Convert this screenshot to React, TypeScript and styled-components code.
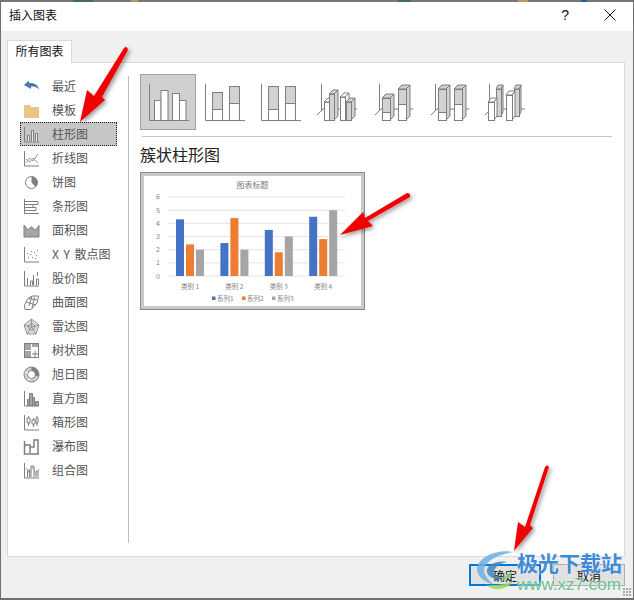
import styled, { createGlobalStyle } from 'styled-components';

const GlobalStyle = createGlobalStyle`
  html, body {
    margin: 0;
    padding: 0;
    background: #fff;
  }
  * {
    box-sizing: border-box;
  }
`;

const GRAY = '#7f7f7f';
const LIGHT = '#d2d2d2';

interface BarProps {
  x: number;
  w: number;
  top: number;
  bottom: number;
  split?: number;
  fill?: string;
  depth?: number;
}

// flat bar, optionally two tone when split is set
const Bar = ({ x, w, top, bottom, split, fill = '#fff' }: BarProps) => (
  <>
    {split !== undefined && (
      <rect x={x + 0.5} y={top + 0.5} width={w} height={split - top} fill={LIGHT} stroke={GRAY} />
    )}
    <rect
      x={x + 0.5}
      y={(split ?? top) + 0.5}
      width={w}
      height={bottom - (split ?? top)}
      fill={fill}
      stroke={GRAY}
    />
  </>
);

const Bar3D = ({ x, w, top, bottom, split, fill = '#fff', depth = 4 }: BarProps) => (
  <>
    <polygon
      points={`${x + w},${top} ${x + w + depth},${top - 4} ${x + w + depth},${bottom - 4} ${x + w},${bottom}`}
      fill={split !== undefined ? LIGHT : fill}
      stroke={GRAY}
    />
    <polygon
      points={`${x},${top} ${x + depth},${top - 4} ${x + w + depth},${top - 4} ${x + w},${top}`}
      fill={split !== undefined ? LIGHT : fill}
      stroke={GRAY}
    />
    <Bar x={x} w={w} top={top} bottom={bottom} split={split} fill={fill} />
  </>
);

const Axis = ({ x, deep }: { x: number; deep?: boolean }) =>
  deep ? (
    <>
      <path d={`M${x + 0.5} 9V36`} stroke={GRAY} fill="none" />
      <path d={`M${x - 4} 40L${x + 2} 34H48`} stroke={GRAY} fill="none" />
    </>
  ) : (
    <path d={`M${x + 0.5} 9V45.5H48`} stroke={GRAY} fill="none" />
  );

const chartTypes = [
  <>
    <Axis x={8} />
    <Bar x={13} w={6.5} top={25} bottom={45} />
    <Bar x={19.5} w={7} top={15} bottom={45} />
    <Bar x={31} w={7} top={18} bottom={45} />
    <Bar x={38} w={6.5} top={25} bottom={45} />
  </>,
  <>
    <Axis x={8} />
    <Bar x={15} w={10} top={17} split={34} bottom={45} />
    <Bar x={32} w={10} top={11} split={28} bottom={45} />
  </>,
  <>
    <Axis x={8} />
    <Bar x={15} w={10} top={11} split={34} bottom={45} />
    <Bar x={32} w={10} top={11} split={28} bottom={45} />
  </>,
  <>
    <Axis x={12} deep />
    <Bar3D x={15} w={5} top={27} bottom={45} />
    <Bar3D x={20} w={5} top={19} bottom={45} fill={LIGHT} />
    <Bar3D x={31} w={5} top={22} bottom={45} />
    <Bar3D x={37} w={5} top={27} bottom={45} fill={LIGHT} />
  </>,
  <>
    <Axis x={14} deep />
    <Bar3D x={17} w={8} top={23} split={37} bottom={45} />
    <Bar3D x={33} w={8} top={14} split={29} bottom={45} />
  </>,
  <>
    <Axis x={14} deep />
    <Bar3D x={17} w={8} top={14} split={37} bottom={45} />
    <Bar3D x={33} w={8} top={14} split={29} bottom={45} />
  </>,
  <>
    <Axis x={12} deep />
    <Bar3D x={19} w={5} top={14} bottom={41} fill={LIGHT} depth={2} />
    <Bar3D x={37} w={5} top={14} bottom={41} fill={LIGHT} depth={2} />
    <Bar3D x={11} w={6} top={27} bottom={45} depth={3} />
    <Bar3D x={29} w={6} top={20} bottom={45} depth={3} />
  </>,
];

const sideIcons: Record<string, React.ReactNode> = {
  recent: (
    <path
      d="M1 7l5-4.500V5c5-.5 9 1.500 10 6.500-2-2.500-5-3.500-8-3V11z"
      fill="#4a7ba8"
    />
  ),
  template: <path d="M1 3h6l1 2h8v11H1z" fill="#e8c586" />,
  column: (
    <>
      <path d="M1.500 1v15H16" fill="none" stroke={GRAY} />
      <path d="M4.500 15.500V9.500h2v6M8.500 15.500V4.500h2v11M12.500 15.500V7.500h2v8" fill="#e8e8e8" stroke={GRAY} />
    </>
  ),
  line: (
    <>
      <path d="M1.500 1v15H16" fill="none" stroke={GRAY} />
      <path d="M3 13l4-5 3 3 5-7M3 9l4 3 3-4 5 5" fill="none" stroke="#9a9a9a" />
    </>
  ),
  pie: (
    <>
      <circle cx="8.500" cy="8.500" r="6" fill="#fff" stroke={GRAY} />
      <path d="M8.500 2.500a6 6 0 0 1 4 10.500L8.500 8.500z" fill={GRAY} />
    </>
  ),
  bar: <path d="M1.500 1v15M1.500 3.500H15v3H1.500M1.500 6.500H10v3H1.500M1.500 9.500H13v3H1.500M1.500 15.500H16" fill="none" stroke={GRAY} />,
  area: <path d="M1 3l4 5 3.500-3.500 3.500 4 4-5V15H1z" fill="#a6a6a6" stroke={GRAY} />,
  scatter: (
    <>
      <path d="M1.500 1v15H16" fill="none" stroke={GRAY} />
      <path
        d="M5 11h1v1H5zM7 8h1v1H7zM9 11h1v1H9zM11 6h1v1h-1zM13 9h1v1h-1zM8 5h1v1H8zM4 7h1v1H4zM12 12h1v1h-1zM14 4h1v1h-1z"
        fill={GRAY}
      />
    </>
  ),
  stock: <path d="M1.500 1v15H16M4.500 15V8M7.500 15V11h2v4M10.500 15V5M13.500 15V9h2v6M14.500 2v4" fill="none" stroke={GRAY} />,
  surface: (
    <path
      d="M1.500 11L5 4.500 9 2h6.500L14 9l-6 6.500H2zM5 4.500l9 1.500M9 2L6 12M3 8l10 3M11.500 3L9 14"
      fill="none"
      stroke={GRAY}
    />
  ),
  radar: (
    <>
      <path d="M8.500 1l7.500 6-3 9H4L1 7z" fill="#dcdcdc" stroke="#969696" />
      <path d="M8.500 1v8M1 7l7.500 2L16 7M4 16l4.500-7 4.500 7M5 8l3.500-3L12 8l-1.500 4h-4z" fill="none" stroke="#969696" />
    </>
  ),
  treemap: (
    <>
      <rect x="1.500" y="1.500" width="14" height="14" fill="#fff" stroke={GRAY} />
      <path d="M2 2h6v6H2zM2 9h6v6H2zM9 2h6v3H9z" fill="#a6a6a6" />
      <path d="M12 9v6M9 12h6" stroke={GRAY} />
    </>
  ),
  sunburst: (
    <>
      <circle cx="8.500" cy="8.500" r="7.500" fill="#d0d0d0" stroke={GRAY} />
      <circle cx="8.500" cy="8.500" r="4" fill="#fff" stroke={GRAY} />
      <path d="M8.500 1a7.500 7.500 0 0 1 7 9.500L12 9.500a4 4 0 0 0-3.500-5z" fill={GRAY} />
      <path d="M1.500 6l3.500 1M5 15l2-3" stroke="#fff" />
    </>
  ),
  histogram: (
    <>
      <path d="M1.500 1v15H16" fill="none" stroke={GRAY} />
      <path d="M4.500 15.500V9.500h2v6zM6.500 15.500V3.500h3v12zM9.500 15.500V7.500h2v8zM12.500 15.500V11.500h3v4z" fill="#a6a6a6" stroke={GRAY} />
    </>
  ),
  box: (
    <>
      <path d="M1.500 1v15H16" fill="none" stroke={GRAY} />
      <path
        d="M5.500 2v2M5.500 9v3M10.500 4v2M10.500 10v3M14 2v2M14 9v3M4 4h3v5H4zM9 6h3v4H9zM13 4h2v5h-2z"
        fill="none"
        stroke={GRAY}
      />
    </>
  ),
  waterfall: <path d="M1.500 3v13H16M1.500 7H7v8M7 9h4V2h4v14" fill="none" stroke={GRAY} strokeWidth="1.500" />,
  combo: (
    <>
      <path d="M1.500 1v15H16M4.500 15V8h2v7M8 15V4h3v11M13 15V9h2v6" fill="none" stroke={GRAY} />
      <path d="M3 6l4 6 3-8 3 9 3-6" fill="none" stroke="#a6a6a6" />
    </>
  ),
};

const sideItems = [
  { key: 'recent', label: '最近' },
  { key: 'template', label: '模板' },
  { key: 'column', label: '柱形图' },
  { key: 'line', label: '折线图' },
  { key: 'pie', label: '饼图' },
  { key: 'bar', label: '条形图' },
  { key: 'area', label: '面积图' },
  { key: 'scatter', label: 'X Y 散点图' },
  { key: 'stock', label: '股价图' },
  { key: 'surface', label: '曲面图' },
  { key: 'radar', label: '雷达图' },
  { key: 'treemap', label: '树状图' },
  { key: 'sunburst', label: '旭日图' },
  { key: 'histogram', label: '直方图' },
  { key: 'box', label: '箱形图' },
  { key: 'waterfall', label: '瀑布图' },
  { key: 'combo', label: '组合图' },
];

const series = [
  { name: '系列1', color: '#4472c4', legendX: 68 },
  { name: '系列2', color: '#ed7d31', legendX: 98 },
  { name: '系列3', color: '#a5a5a5', legendX: 128 },
];

const categories = [
  { name: '类别 1', values: [4.3, 2.4, 2] },
  { name: '类别 2', values: [2.5, 4.4, 2] },
  { name: '类别 3', values: [3.5, 1.8, 3] },
  { name: '类别 4', values: [4.5, 2.8, 5] },
];

const STEP = 13.17;
const ZERO = 100;

const PreviewChart = () => (
  <svg width="217" height="130" viewBox="0 0 217 130" fontFamily='"Noto Sans CJK SC", sans-serif'>
    <text x="108.500" y="12" fontSize="8" fill="#7a7a7a" textAnchor="middle">
      图表标题
    </text>
    {[0, 1, 2, 3, 4, 5, 6].map((n) => (
      <g key={n}>
        <line x1="24" x2="201" y1={ZERO - n * STEP} y2={ZERO - n * STEP} stroke="#e4e4e4" />
        <text x="14" y={ZERO - n * STEP + 2.500} fontSize="7" fill="#7f7f7f" textAnchor="middle">
          {n}
        </text>
      </g>
    ))}
    {categories.map((c, i) => (
      <g key={c.name}>
        {c.values.map((v, j) => (
          <rect
            key={j}
            x={32 + i * 44.4 + j * 10}
            y={ZERO - v * STEP}
            width="8"
            height={v * STEP}
            fill={series[j].color}
          />
        ))}
        <text x={46 + i * 44.4} y="112.500" fontSize="6.500" fill="#7f7f7f" textAnchor="middle">
          {c.name}
        </text>
      </g>
    ))}
    {series.map((s) => (
      <g key={s.name}>
        <rect x={s.legendX} y="120.500" width="3.500" height="3.500" fill={s.color} />
        <text x={s.legendX + 5} y="124.500" fontSize="6.500" fill="#7f7f7f">
          {s.name}
        </text>
      </g>
    ))}
  </svg>
);

const arrows = [
  'M80 122L87 90 94 96 124 48Q127 45 128 50L102 97 105 100Z',
  'M340 235L363 212 365 218 407 193Q411 193 410 197L368 221 373 226Z',
  'M514 551L518 522 525 527 545 467Q547 464 549 467L530 525 533 528Z',
];

const Overlay = () => (
  <OverlaySvg width="634" height="600" viewBox="0 0 634 600">
    <defs>
      <filter id="arrowShadow" x="-30%" y="-30%" width="160%" height="160%">
        <feDropShadow dx="2" dy="2" stdDeviation="2" floodColor="#000" floodOpacity="0.4" />
      </filter>
    </defs>
    {/* watermark swirl */}
    <g opacity="0.85">
      <path
        d="M514 552C497 549 478 557 477 569 477 577 485 582 494 585 486 578 482 572 485 566 490 558 502 554 514 552z"
        fill="#6db0e6"
      />
      <path
        d="M507 562C495 560 486 566 487 572 488 577 495 580 503 579 496 577 492 573 495 569 497 565 502 563 507 562z"
        fill="#3f88b8"
      />
      <path d="M486 585C494 592 508 590 514 580 507 584 497 586 486 585z" fill="#a5d45c" />
      <path d="M500 577C505 577 510 574 512 570 513 575 509 579 503 580z" fill="#7fc98a" />
    </g>
    {arrows.map((d) => (
      <path key={d} d={d} fill="#f00000" filter="url(#arrowShadow)" />
    ))}
  </OverlaySvg>
);

export default function App() {
  return (
    <>
      <GlobalStyle />
      <Frame>
        <TopEdge />
        <TitleBar>
          <Title>插入图表</Title>
          <TitleButtons>
            <HelpMark>?</HelpMark>
            <svg width="12" height="12" viewBox="0 0 12 12">
              <path d="M.500.500l11 11M11.500.500l-11 11" stroke="#111" fill="none" />
            </svg>
          </TitleButtons>
        </TitleBar>
        <Body>
          <TabStrip>
            <Tab>所有图表</Tab>
          </TabStrip>
          <Panel>
            <Sidebar>
              {sideItems.map((item) => (
                <SideItem key={item.key} $selected={item.key === 'column'}>
                  <svg width="17" height="17" viewBox="0 0 17 17">
                    {sideIcons[item.key]}
                  </svg>
                  <SideLabel>{item.label}</SideLabel>
                </SideItem>
              ))}
            </Sidebar>
            <VerticalRule />
            <Content>
              <TypeRow>
                {chartTypes.map((icon, i) => (
                  <TypeButton key={i} $selected={i === 0}>
                    <svg width="54" height="54" viewBox="0 0 54 54">
                      {icon}
                    </svg>
                  </TypeButton>
                ))}
              </TypeRow>
              <Divider />
              <Heading>簇状柱形图</Heading>
              <Preview>
                <PreviewChart />
              </Preview>
            </Content>
          </Panel>
        </Body>
        <Footer>
          <OkButton>确定</OkButton>
          <CancelButton>取消</CancelButton>
        </Footer>
        <Grip />
        <Overlay />
        <WatermarkName>极光下载站</WatermarkName>
        <WatermarkUrl>www.xz7.com</WatermarkUrl>
      </Frame>
    </>
  );
}

const Frame = styled.div`
  position: relative;
  width: 634px;
  height: 600px;
  display: flex;
  flex-direction: column;
  background: #f0f0f0;
  border-left: 1px solid #6f6f6f;
  border-right: 1px solid #6f6f6f;
  border-bottom: 2px solid #6f6f6f;
  font-family: "Noto Sans CJK SC", "Liberation Sans", sans-serif;
  font-size: 12px;
  color: #222;
  overflow: hidden;
`;

const TopEdge = styled.div`
  height: 2px;
  background: linear-gradient(
    to right,
    #777 72px,
    #3f6e5c 72px 92px,
    #777 92px 130px,
    #b59a63 130px 137px,
    #777 137px 397px,
    #3f6e5c 397px 410px,
    #777 410px 517px,
    #b59a63 517px 527px,
    #777 527px 580px,
    #2f5f8f 580px 586px,
    #777 586px
  );
`;

const TitleBar = styled.div`
  height: 29px;
  display: flex;
  align-items: center;
  justify-content: space-between;
  padding: 0 17px 4px 8px;
  background: #fff;
`;

const Title = styled.span`
  font-size: 12px;
  color: #111;
`;

const TitleButtons = styled.div`
  display: flex;
  align-items: center;
  gap: 35px;
`;

const HelpMark = styled.span`
  font-family: "Liberation Sans", sans-serif;
  font-size: 14px;
  color: #111;
`;

const Body = styled.div`
  flex: 1;
  display: flex;
  flex-direction: column;
  padding: 9px 8px 0 6px;
  min-height: 0;
`;

const TabStrip = styled.div`
  display: flex;
  height: 22px;
`;

const Tab = styled.div`
  position: relative;
  z-index: 1;
  width: 65px;
  height: 23px;
  display: flex;
  align-items: center;
  justify-content: center;
  padding-bottom: 3px;
  background: #fff;
  border: 1px solid #d9d9d9;
  border-bottom: none;
  color: #111;
`;

const Panel = styled.div`
  flex: 1;
  display: flex;
  background: #fff;
  border: 1px solid #d9d9d9;
  padding: 11px 0 13px 12px;
  min-height: 0;
`;

const Sidebar = styled.div`
  width: 108px;
  flex-shrink: 0;
`;

const VerticalRule = styled.div`
  width: 1px;
  flex-shrink: 0;
  margin-top: 2px;
  background: #bdbdbd;
`;

const SideItem = styled.div<{ $selected?: boolean }>`
  width: 97px;
  height: 24px;
  display: flex;
  align-items: center;
  padding-left: 3px;
  background: ${(p) => (p.$selected ? '#c6c6c6' : 'transparent')};
  outline: ${(p) => (p.$selected ? '1px dotted #222' : 'none')};
  outline-offset: -1px;
`;

const SideLabel = styled.span`
  margin-left: 12px;
  padding-bottom: 2px;
  color: #555;
  font-size: 12px;
  word-spacing: 2px;
  white-space: nowrap;
`;

const Content = styled.div`
  flex: 1;
  display: flex;
  flex-direction: column;
  align-items: flex-start;
  padding: 0 12px 0 11px;
  min-width: 0;
`;

const TypeRow = styled.div`
  display: flex;
`;

const TypeButton = styled.div<{ $selected?: boolean }>`
  width: 56px;
  height: 56px;
  border: 1px solid ${(p) => (p.$selected ? '#a3a3a3' : 'transparent')};
  background: ${(p) => (p.$selected ? '#d0d0ce' : 'transparent')};
`;

const Divider = styled.div`
  align-self: stretch;
  height: 1px;
  margin: 6px 0 0 2px;
  background: #c6c6c6;
`;

const Heading = styled.div`
  margin-top: 6px;
  height: 24px;
  line-height: 22px;
  font-size: 16px;
  color: #222;
`;

const Preview = styled.div`
  margin-top: 5px;
  width: 225px;
  height: 138px;
  background: #fff;
  border: 1px solid #8a8a8a;
  padding: 3px;
  outline: 3px solid #c9c9c7;
  outline-offset: -4px;
  display: flex;
`;

const Footer = styled.div`
  height: 41px;
  flex-shrink: 0;
  display: flex;
  justify-content: flex-end;
  gap: 12px;
  padding: 7px 8px 0 0;
`;

const CancelButton = styled.div`
  width: 72px;
  height: 22px;
  display: flex;
  align-items: center;
  justify-content: center;
  background: #e1e1e1;
  border: 1px solid #adadad;
  color: #111;
`;

const OkButton = styled(CancelButton)`
  border: 2px solid #0078d7;
`;

const Grip = styled.div`
  position: absolute;
  right: 1px;
  bottom: 1px;
  width: 9px;
  height: 9px;
  background: radial-gradient(circle at 1px 1px, #a8a8a8 1px, transparent 1px) 0 0 / 3px 3px;
`;

const OverlaySvg = styled.svg`
  position: absolute;
  left: -1px;
  top: 0;
  pointer-events: none;
`;

const WatermarkName = styled.div`
  position: absolute;
  left: 516px;
  top: 549px;
  font-size: 21px;
  font-weight: 700;
  line-height: 26px;
  color: #3f8bd6;
  text-shadow: 0 0 2px #fff;
  white-space: nowrap;
`;

const WatermarkUrl = styled.div`
  position: absolute;
  left: 516px;
  top: 576px;
  font-family: "Liberation Sans", sans-serif;
  font-size: 17px;
  line-height: 18px;
  color: #6cc08f;
  text-shadow: 0 0 2px #fff;
  white-space: nowrap;
`;
